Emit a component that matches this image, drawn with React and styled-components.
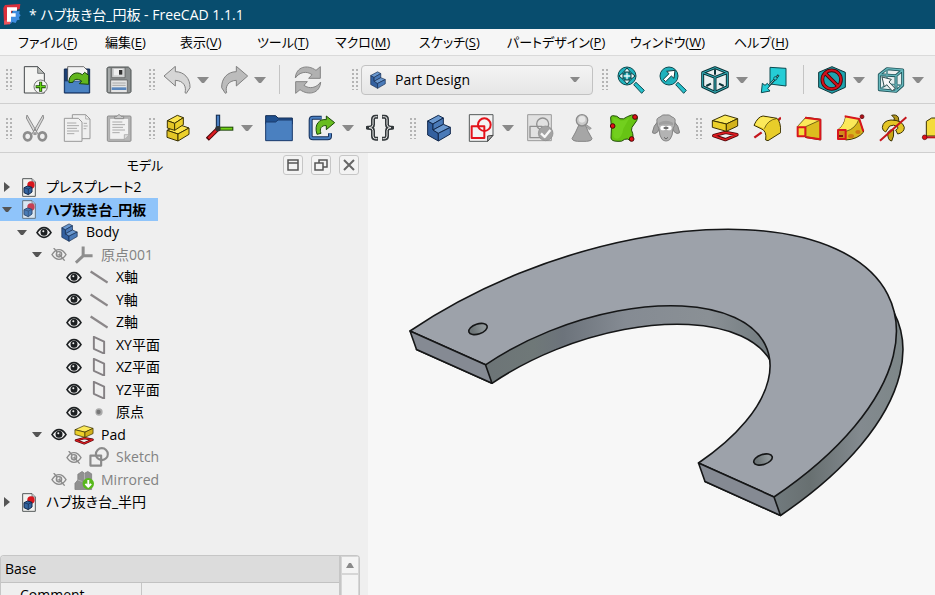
import React, { useState } from "react";
import styled, { createGlobalStyle, css } from "styled-components";

const GlobalStyle = createGlobalStyle`
  * {
    box-sizing: border-box;
  }

  body {
    margin: 0;
    background-color: #efefef;
    color: #000;
    font-family: "Open Sans", "Noto Sans CJK JP", sans-serif;
    font-size: 14px;
    line-height: 20px;
    font-feature-settings: "palt";
  }

  button,
  select {
    font: inherit;
    font-feature-settings: inherit;
    color: inherit;
    background: none;
    border: none;
    margin: 0;
    padding: 0;
  }

  svg {
    display: block;
    flex: none;
  }
`;

const Window = styled.div`
  display: flex;
  flex-direction: column;
  height: 100vh;
  overflow: hidden;
`;

const TitleBar = styled.header`
  display: flex;
  flex: none;
  align-items: center;
  gap: 8px;
  height: 29px;
  padding-left: 3px;
  background-color: #084d6e;
  color: #fff;
`;

const Title = styled.h1`
  margin: 0;
  font-size: 14px;
  font-weight: 400;
  white-space: nowrap;
`;

const MenuBar = styled.nav`
  display: flex;
  flex: none;
  gap: 28px;
  height: 27px;
  padding-left: 18px;
  background-color: #f6f6f6;
  border-bottom: 1px solid #dadada;
  font-size: 13px;
`;

const MenuItem = styled.button`
  flex: none;
  width: ${(props) => props.$width}px;
  text-align: left;
  white-space: nowrap;

  u {
    text-underline-offset: 2px;
    text-decoration-thickness: 1px;
  }
`;

const ToolBar = styled.div`
  display: flex;
  flex: none;
  align-items: center;
  height: ${(props) => props.$height}px;
  border-bottom: 1px solid #cfcfcf;
  overflow: hidden;
`;

const Group = styled.div`
  display: flex;
  flex: none;
  align-items: center;
  margin-right: ${(props) => (props.$spaced ? 17 : 3)}px;
`;

const Handle = styled.span`
  width: 14px;
  height: 21px;
  border-left: 6px solid transparent;
  border-right: 1px solid transparent;
  background-image: radial-gradient(circle at 1px 1px, #b4b4b4 1px, transparent 1px);
  background-size: 4px 4px;
  background-clip: padding-box;
  background-origin: padding-box;
`;

const Tool = styled.button`
  display: flex;
  align-items: center;
  justify-content: center;
  width: ${(props) => (props.$slim ? 40 : 42)}px;
  height: 40px;
`;

const DropButton = styled.button`
  display: flex;
  align-items: center;
  width: 17px;
  height: 40px;
`;

const Separator = styled.span`
  width: 16px;
  height: 29px;
  background: linear-gradient(#c4c4c4, #c4c4c4) center / 1px 100% no-repeat;
`;

const Workbench = styled.label`
  display: flex;
  align-items: center;
  gap: 8px;
  width: 232px;
  height: 30px;
  margin-left: 1px;
  padding: 0 12px 0 7px;
  border: 1px solid #c2c2c2;
  border-radius: 4px;
  background: linear-gradient(#f4f4f4, #e6e6e6);

  select {
    flex: 1;
    appearance: none;
    outline: none;
  }
`;

const Main = styled.main`
  display: flex;
  flex: 1;
  min-height: 0;
`;

const SidePanel = styled.aside`
  display: flex;
  flex-direction: column;
  flex: none;
  width: 368px;
  overflow: hidden;
`;

const PanelHeader = styled.div`
  display: flex;
  flex: none;
  align-items: center;
  gap: 8px;
  height: 23px;
  padding: 0 9px 0 15px;
`;

const PanelTitle = styled.h2`
  flex: 1;
  margin: 0;
  font-size: 13px;
  font-weight: 400;
  text-align: center;
`;

const PanelButton = styled.button`
  display: flex;
  align-items: center;
  justify-content: center;
  width: 20px;
  height: 20px;
  border: 1px solid #c6c6c6;
  border-radius: 3px;
  background-color: #f3f3f3;
`;

const Tree = styled.ul`
  flex: none;
  margin: 0;
  padding: 0 0 42px;
  list-style: none;
`;

const TreeRow = styled.li`
  display: flex;
  align-items: center;
  width: fit-content;
  height: 22px;
  padding-left: ${(props) => props.$depth * 15}px;
  padding-right: 12px;
  color: ${(props) => (props.$muted ? "#828282" : "#000")};
  white-space: nowrap;

  &:nth-child(even) {
    height: 23px;
  }

  ${(props) =>
    props.$selected &&
    css`
      background-color: #8fc4fa;
      font-weight: 700;
    `}
`;

const Twisty = styled.button`
  display: flex;
  justify-content: center;
  width: 14px;
  margin-right: 6px;
`;

const EyeButton = styled.button`
  display: flex;
  justify-content: center;
  width: 18px;
  margin-right: 7px;
`;

const NodeIcon = styled.span`
  display: flex;
  justify-content: center;
  width: 18px;
  margin-right: 8px;
`;

const Properties = styled.section`
  display: flex;
  flex: 1;
  min-height: 0;
  margin-right: 8px;
  border: 1px solid #c6c6c6;
  border-bottom: none;
  border-radius: 4px 4px 0 0;
  overflow: hidden;
`;

const PropertyTable = styled.table`
  flex: 1;
  height: fit-content;
  border-collapse: collapse;
  table-layout: fixed;

  th,
  td {
    height: 26px;
    padding: 0;
    font-weight: 400;
    text-align: left;
  }

  thead th {
    padding-left: 4px;
    background-color: #dcdcdc;
    border-bottom: 1px solid #c2c2c2;
  }

  tbody th {
    width: 140px;
    padding-left: 19px;
    border-right: 1px solid #c6c6c6;
  }
`;

const ScrollTrack = styled.div`
  display: flex;
  flex-direction: column;
  gap: 2px;
  width: 20px;
  padding: 1px 1px 0;
  border-left: 2px solid #c6c6c6;
  background-color: #d6d6d6;
`;

const ScrollUp = styled.button`
  display: flex;
  align-items: center;
  justify-content: center;
  height: 16px;
  background-color: #f4f4f4;
`;

const ScrollThumb = styled.div`
  flex: 1;
  background-color: #f4f4f4;
`;

const Viewport = styled.section`
  flex: 1;
  min-width: 0;
  background-color: #f7f7f7;

  svg {
    width: 100%;
    height: 100%;
  }
`;

/* ---------- icons ---------- */

const Icon = ({ size = 28, children }) => (
  <svg width={size} height={size} viewBox="0 0 84 84" strokeLinejoin="round" aria-hidden="true">
    {children}
  </svg>
);

const Caret = ({ width = 12 }) => (
  <svg width={width} height={width / 2} viewBox="0 0 12 6" aria-hidden="true">
    <path d="M0 0H12L7 6H5Z" fill="#8a8a8a" />
  </svg>
);

const Logo = () => (
  <svg width="18" height="21" viewBox="0 0 54 63" aria-hidden="true">
    <path d="M30 20 38 18 42 22 50 21 49 29 53 34 48 40 50 47 42 49 38 57 28 54 22 60 18 54Z" fill="#3e8de0" />
    <path d="M6 3 52 0 50 15 27 21 21 61 3 56 1 12Z" fill="#d92f3c" />
    <path d="M4 50 22 44 21 61 3 62Z" fill="#f0545c" />
    <path d="M12 10H42V20H24V28H38V38H24V53H12Z" fill="#fff" />
  </svg>
);

const NewIcon = () => (
  <Icon>
    <path d="M10 2H50L70 22V81H10Z" fill="#f4f4f2" stroke="#44484a" strokeWidth="3" />
    <path d="M50 2V22H70Z" fill="#b9bbb8" stroke="#44484a" strokeWidth="2" />
    <circle cx="59" cy="62" r="20" fill="#f3f3f3" stroke="#777" strokeWidth="3" />
    <path d="M59 47V77M44 62H74" stroke="#1c4a05" strokeWidth="9" />
    <path d="M59 49V75M46 62H72" stroke="#63d616" strokeWidth="4" />
  </Icon>
);

const OpenIcon = () => (
  <Icon>
    <path d="M4 9H80V81H4Z" fill="#1c3f74" stroke="#10294e" strokeWidth="3" />
    <path d="M14 2H62L74 14V50H14Z" fill="#f3f3f3" stroke="#333" strokeWidth="2" />
    <path d="M5 45H79V80H5Z" fill="#4a82c2" stroke="#17366a" strokeWidth="2" />
    <path d="M18 50C16 28 38 12 58 26L65 19 77 28V55L49 53 56 45C42 36 32 40 30 49Z" fill="#62b61d" stroke="#17440a" strokeWidth="3" />
  </Icon>
);

const SaveIcon = () => (
  <Icon>
    <path d="M10 3H70L78 11V77L74 81H10L6 77V7Z" fill="#8b8f8f" stroke="#4d5252" strokeWidth="3" />
    <path d="M10 7H14V77H10Z" fill="#b4b7b7" />
    <rect x="20" y="5" width="40" height="30" fill="#cfd1d1" stroke="#555" strokeWidth="2" />
    <rect x="27" y="9" width="26" height="19" fill="#efefef" />
    <rect x="42" y="12" width="10" height="14" fill="#333" />
    <rect x="17" y="42" width="50" height="38" fill="#e5e5e5" stroke="#555" strokeWidth="2" />
    <path d="M22 51H62M22 58H62" stroke="#888" strokeWidth="2" />
    <rect x="20" y="64" width="44" height="8" fill="#5a86bd" />
  </Icon>
);

const undoPath = "M3 30 37 1V17C63 17 82 37 81 65L70 82 66 80C71 62 62 44 37 43V60Z";

const UndoIcon = () => (
  <Icon>
    <path d={undoPath} fill="#d6d6d6" stroke="#808080" strokeWidth="3" />
  </Icon>
);

const RedoIcon = () => (
  <Icon>
    <g transform="matrix(-1 0 0 1 86 0)">
      <path d={undoPath} fill="#bcbcbc" stroke="#808080" strokeWidth="3" />
    </g>
  </Icon>
);

const RefreshIcon = () => (
  <Icon>
    <g fill="#b1b1b1" stroke="#858585" strokeWidth="3">
      <path d="M4 36C6 2 40-6 66 13L79 2V37H44L54 26C38 14 16 18 4 36Z" />
      <path d="M80 48C78 82 44 90 18 71L5 82V47H40L30 58C46 70 68 66 80 48Z" />
    </g>
  </Icon>
);

const Block = ({ light, mid, dark, line }) => (
  <g stroke={line} strokeWidth="3">
    <path d="M8 21V63L40 81V58L24 48V30Z" fill={dark} />
    <path d="M8 21 40 4 55 12 24 30Z" fill={light} />
    <path d="M24 30 55 12V31L24 48Z" fill={mid} />
    <path d="M24 48 55 31 76 40 40 58Z" fill={light} />
    <path d="M40 58 76 40V60L40 81Z" fill={mid} />
  </g>
);

const BodyIcon = ({ size }) => (
  <Icon size={size}>
    <Block light="#6a98cf" mid="#4a7ab8" dark="#33609f" line="#11284c" />
  </Icon>
);

const ZoomBase = () => (
  <g stroke="#0c4a50" strokeWidth="3">
    <path d="M50 56 57 49 82 73 74 82Z" fill="#27c0cb" />
    <circle cx="30" cy="30" r="27" fill="#20b2bd" />
  </g>
);

const ZoomFitIcon = () => (
  <Icon>
    <ZoomBase />
    <path d="M30 6 40 18H20ZM30 54 40 42H20ZM6 30 18 20V40ZM54 30 42 20V40Z" fill="#e4f7f8" stroke="#0c3a3e" strokeWidth="3" />
    <path d="M21 21H39V39H21Z" fill="#20b2bd" stroke="#0c3a3e" strokeWidth="2" />
    <path d="M30 20V40M20 30H40" stroke="#e4f7f8" strokeWidth="4" />
  </Icon>
);

const ZoomSelIcon = () => (
  <Icon>
    <ZoomBase />
    <path d="M48 13 45 37 37 30 20 47 13 40 30 23 23 16Z" fill="#fff" stroke="#0c3a3e" strokeWidth="3" />
  </Icon>
);

const isoEdges = "M42 5 79 20V62L42 79 5 62V20ZM5 20 42 34 79 20M42 34V79";

const IsoIcon = () => (
  <Icon>
    <path d={isoEdges} fill="#eaf0f0" stroke="#0a3338" strokeWidth="9" />
    <path d={isoEdges} fill="none" stroke="#35b4bd" strokeWidth="3" />
    <path d="M42 10V26M16 60 30 53M68 60 54 53" stroke="#0a3338" strokeWidth="6" />
  </Icon>
);

const AlignIcon = () => (
  <Icon>
    <path d="M30 4 78 7V60L30 54Z" fill="#25cdd6" stroke="#0c4a50" strokeWidth="3" />
    <path d="M56 27 26 60" stroke="#0c3a3e" strokeWidth="7" />
    <path d="M54 29 24 61" stroke="#bff0f2" strokeWidth="2" />
    <circle cx="46" cy="37" r="5" fill="#25cdd6" stroke="#0c3a3e" strokeWidth="2" />
    <path d="M4 80 7 52 15 58 22 52 29 60 23 67 30 75Z" fill="#25cdd6" stroke="#0c4a50" strokeWidth="3" />
  </Icon>
);

const NoSignIcon = () => (
  <Icon>
    <path d="M42 2 82 19V64L42 82 2 64V19Z" fill="#1fa5b0" stroke="#0a3338" strokeWidth="3" />
    <circle cx="41" cy="41" r="28" fill="none" stroke="#3f0408" strokeWidth="11" />
    <path d="M22 22 60 60" stroke="#3f0408" strokeWidth="11" />
    <circle cx="41" cy="41" r="28" fill="none" stroke="#d4121c" strokeWidth="6" />
    <path d="M22 22 60 60" stroke="#d4121c" strokeWidth="6" />
  </Icon>
);

const selectEdges = "M7 26 30 8 77 12V58L57 76 7 71ZM7 26 57 29 77 12M57 29V76";

const CubeSelectIcon = () => (
  <Icon>
    <path d={selectEdges} fill="#e4eeee" stroke="#1f5359" strokeWidth="9" />
    <path d="M30 10V54L9 70M30 54 76 58" fill="none" stroke="#4f8e93" strokeWidth="5" />
    <path d={selectEdges} fill="none" stroke="#66b9be" strokeWidth="4" />
    <path d="M15 33 43 40 36 48 54 67 46 75 29 56 22 63Z" fill="#f6f6f6" stroke="#304e50" strokeWidth="3" />
  </Icon>
);

const CutIcon = () => (
  <Icon>
    <path d="M18 3 50 58 43 62 16 12ZM66 3 34 58 41 62 68 12Z" fill="#d8d8d8" stroke="#8d8d8d" strokeWidth="3" />
    <ellipse cx="20" cy="67" rx="11" ry="12" fill="none" stroke="#8d8d8d" strokeWidth="8" />
    <ellipse cx="64" cy="67" rx="11" ry="12" fill="none" stroke="#8d8d8d" strokeWidth="8" />
    <circle cx="42" cy="48" r="3" fill="#888" />
  </Icon>
);

const CopyIcon = () => (
  <Icon>
    <path d="M28 2H68L81 15V74H28Z" fill="#efefef" stroke="#999" strokeWidth="3" />
    <path d="M68 2V15H81" fill="none" stroke="#999" strokeWidth="2" />
    <path d="M4 13H46L57 24V82H4Z" fill="#f1f1f1" stroke="#999" strokeWidth="3" />
    <path d="M12 27H40M12 35H48M12 43H42M12 51H48M12 59H34M62 28H72M62 36H74M62 44H70" stroke="#aaa" strokeWidth="3" />
  </Icon>
);

const PasteIcon = () => (
  <Icon>
    <rect x="7" y="6" width="71" height="76" rx="3" fill="#b6b6b6" stroke="#8d8d8d" strokeWidth="3" />
    <path d="M14 13H71V62L58 76H14Z" fill="#f1f1f1" stroke="#999" strokeWidth="2" />
    <path d="M29 14V7H36L42 1 48 7H56V14Z" fill="#c9c9c9" stroke="#8d8d8d" strokeWidth="3" />
    <path d="M22 24H52M22 32H60M22 40H54M22 48H60M22 56H44" stroke="#aaa" strokeWidth="3" />
    <path d="M58 76V62H71" fill="#ddd" stroke="#999" strokeWidth="2" />
  </Icon>
);

const PartIcon = () => (
  <Icon>
    <g stroke="#3b3203" strokeWidth="3">
      <path d="M9 49 46 32 75 42 42 60Z" fill="#fbe44d" />
      <path d="M9 49 42 60V81L9 70Z" fill="#e3c526" />
      <path d="M42 60 75 42V61L42 81Z" fill="#ecd02a" />
      <path d="M10 20 40 4 58 11 32 28Z" fill="#fbe44d" />
      <path d="M10 20 32 28V49L10 42Z" fill="#e3c526" />
      <path d="M32 28 58 11V32L32 49Z" fill="#ecd02a" />
    </g>
  </Icon>
);

const AxesIcon = () => (
  <Icon>
    <path d="M36 2V44" stroke="#142b4c" strokeWidth="13" />
    <path d="M36 5V44" stroke="#4a7fc1" strokeWidth="7" />
    <path d="M36 44H82" stroke="#1c4408" strokeWidth="12" />
    <path d="M36 44H79" stroke="#73d216" strokeWidth="6" />
    <path d="M36 44 4 76" stroke="#4a0508" strokeWidth="13" />
    <path d="M36 44 7 73" stroke="#dd1c22" strokeWidth="7" />
    <circle cx="36" cy="44" r="8" fill="#2f3436" />
  </Icon>
);

const FolderIcon = () => (
  <Icon>
    <path d="M2 5H32L39 12H82V30H2Z" fill="#20508f" stroke="#122c54" strokeWidth="3" />
    <path d="M2 24H32L39 18H82V80H2Z" fill="#4a80c0" stroke="#1a3a6b" strokeWidth="3" />
  </Icon>
);

const LinkIcon = () => (
  <Icon>
    <path d="M44 11H18Q11 11 11 18V66Q11 73 18 73H62Q69 73 69 66V58" fill="none" stroke="#16305a" strokeWidth="12" />
    <path d="M44 11H18Q11 11 11 18V66Q11 73 18 73H62Q69 73 69 66V58" fill="none" stroke="#4a7fc1" strokeWidth="6" />
    <path d="M30 61C20 30 38 14 58 17V6L83 26 58 47V35C44 33 36 44 42 58Z" fill="#68bd20" stroke="#1b4a08" strokeWidth="3" />
  </Icon>
);

const BracesIcon = () => (
  <Icon>
    <g fill="none" stroke="#33383b" strokeWidth="12">
      <path d="M36 8H29Q21 8 21 16V32Q21 41 5 41Q21 41 21 50V66Q21 74 29 74H36" />
      <path d="M48 8H55Q63 8 63 16V32Q63 41 79 41Q63 41 63 50V66Q63 74 55 74H48" />
    </g>
    <g fill="none" stroke="#e8e8e8" strokeWidth="3">
      <path d="M34 8H29Q21 8 21 16V32Q21 41 9 41Q21 41 21 50V66Q21 74 29 74H34" />
      <path d="M50 8H55Q63 8 63 16V32Q63 41 75 41Q63 41 63 50V66Q63 74 55 74H50" />
    </g>
  </Icon>
);

const SketchIcon = () => (
  <Icon>
    <path d="M7 2H78V64L62 82H7Z" fill="#f3f3f3" stroke="#55595a" strokeWidth="3" />
    <path d="M62 82V66L78 64Z" fill="#aaa" stroke="#444" strokeWidth="3" />
    <rect x="14" y="37" width="38" height="35" fill="none" stroke="#e3131b" strokeWidth="6" />
    <circle cx="52" cy="32" r="19" fill="none" stroke="#e3131b" strokeWidth="6" />
  </Icon>
);

const ValidateIcon = () => (
  <Icon>
    <path d="M5 2H76V80H5Z" fill="#e1e1e1" stroke="#9b9b9b" strokeWidth="3" />
    <rect x="12" y="37" width="36" height="34" fill="none" stroke="#909090" strokeWidth="4" />
    <circle cx="50" cy="30" r="18" fill="none" stroke="#909090" strokeWidth="4" />
    <circle cx="59" cy="58" r="22" fill="#a3a3a3" stroke="#8a8a8a" strokeWidth="2" />
    <path d="M45 58 56 69 73 48" fill="none" stroke="#f7f7f7" strokeWidth="7" />
  </Icon>
);

const CheckGeometryIcon = () => (
  <Icon>
    <path d="M33 32 23 54 12 74Q13 81 28 82H56Q72 81 72 74L60 52 52 32Z" fill="#a6a6a6" stroke="#858585" strokeWidth="3" />
    <path d="M55 32 70 43 64 47 52 36Z" fill="#aaa" stroke="#858585" strokeWidth="2" />
    <circle cx="42" cy="19" r="17" fill="#c9c9c9" stroke="#8c8c8c" strokeWidth="4" />
    <circle cx="42" cy="16" r="10" fill="#e6e6e6" />
  </Icon>
);

const BinderIcon = () => (
  <Icon>
    <path d="M2 12Q1 6 8 5Q22 4 30 14Q40 18 52 8Q64 0 78 4Q86 10 80 20L66 40Q62 48 68 58Q72 76 62 80Q52 72 44 76Q36 84 24 82Q4 82 3 72Q6 44 2 12Z" fill="#67c414" stroke="#204d06" strokeWidth="3" />
    <path d="M10 12Q24 12 32 20Q44 22 58 12L40 44Q36 70 22 74Q12 74 10 66Z" fill="#72cf1e" />
    <g fill="#e01018" stroke="#4a0508" strokeWidth="3">
      <circle cx="75" cy="9" r="7" />
      <circle cx="8" cy="36" r="7" />
      <circle cx="65" cy="75" r="7" />
    </g>
  </Icon>
);

const CloneIcon = () => (
  <Icon>
    <path d="M18 22Q4 34 1 56Q8 62 17 54L24 38ZM66 22Q80 34 83 56Q76 62 67 54L60 38Z" fill="#a2a2a2" stroke="#808080" strokeWidth="3" />
    <path d="M15 24Q12 12 24 9Q32 0 42 3Q52 0 60 9Q72 12 69 24Q70 34 63 44Q62 66 54 76Q42 86 30 76Q22 66 21 44Q14 34 15 24Z" fill="#b3b3b3" stroke="#858585" strokeWidth="3" />
    <path d="M21 26Q42 14 63 26V34Q42 28 21 34Z" fill="#9f9f9f" />
    <ellipse cx="33" cy="42" rx="8" ry="7" fill="#fff" />
    <ellipse cx="51" cy="42" rx="8" ry="7" fill="#fff" />
    <path d="M35 42H49" stroke="#555" strokeWidth="5" />
    <path d="M36 70 42 75 48 70" fill="none" stroke="#666" strokeWidth="3" />
  </Icon>
);

const PadIcon = ({ size }) => (
  <Icon size={size}>
    <path d="M8 65 44 55 78 62 43 77Z" fill="none" stroke="#4a0508" strokeWidth="10" />
    <path d="M8 65 44 55 78 62 43 77Z" fill="none" stroke="#dd1c22" strokeWidth="5" />
    <g stroke="#3b3203" strokeWidth="3">
      <path d="M4 20 42 3 80 14 46 30Z" fill="#fbe95a" />
      <path d="M4 20 46 30V52L4 40Z" fill="#ecd02a" />
      <path d="M46 30 80 14V36L46 52Z" fill="#d3b21c" />
    </g>
  </Icon>
);

const RevolutionIcon = () => (
  <Icon>
    <path d="M4 71 26 55M68 26 84 11" stroke="#c4151c" strokeWidth="7" />
    <path d="M3 34Q14 8 30 6L72 13Q84 24 83 56L45 80 38 78Q42 50 24 44Z" fill="#e8cd2a" stroke="#3b3203" strokeWidth="3" />
    <path d="M6 33Q16 10 30 8L66 14Q44 18 34 44Q28 40 6 33Z" fill="#fbe95a" />
    <path d="M34 44Q44 18 70 14" fill="none" stroke="#3b3203" strokeWidth="2" />
  </Icon>
);

const LoftIcon = () => (
  <Icon>
    <path d="M7 38 33 10 77 16V78L31 70Z" fill="#e8cd2a" stroke="#3b3203" strokeWidth="3" />
    <path d="M7 38 33 12 77 18 32 38Z" fill="#fbe95a" />
    <path d="M32 38 76 18V76L32 68Z" fill="#dcbd1f" stroke="#3b3203" strokeWidth="2" />
    <path d="M30 11 76 17V76L34 70" fill="none" stroke="#d8161d" strokeWidth="6" />
    <rect x="8" y="40" width="23" height="27" fill="#f4dc3c" stroke="#d8161d" strokeWidth="6" />
  </Icon>
);

const PipeIcon = () => (
  <Icon>
    <path d="M4 46Q22 34 26 8L66 15 80 54Q62 76 26 78Z" fill="#d6b51d" stroke="#3b3203" strokeWidth="3" />
    <path d="M4 46Q22 34 26 8L66 15Q56 44 27 52Z" fill="#fbe95a" />
    <path d="M27 52Q56 44 66 15" fill="none" stroke="#3b3203" strokeWidth="2" />
    <ellipse cx="42" cy="66" rx="9" ry="6" fill="#cf7a14" />
    <ellipse cx="63" cy="54" rx="8" ry="6" fill="#cf7a14" />
    <path d="M23 7 67 15 79 52" fill="none" stroke="#d8161d" strokeWidth="6" />
    <rect x="3" y="48" width="23" height="27" fill="#d08a1c" stroke="#d8161d" strokeWidth="6" />
    <path d="M6 66H18" stroke="#7a0d10" strokeWidth="6" />
    <circle cx="75" cy="8" r="6" fill="#b01018" stroke="#4a0508" strokeWidth="2" />
  </Icon>
);

const HelixIcon = () => (
  <Icon>
    <path d="M38 4Q52 0 58 10L60 24 44 26 46 12Z" fill="#b4961a" stroke="#3b3203" strokeWidth="3" />
    <path d="M10 40Q12 20 36 18Q70 18 76 40Q76 56 56 60L50 48Q60 44 56 38Q44 30 32 36L20 54Q10 50 10 40Z" fill="#e3c526" stroke="#3b3203" strokeWidth="3" />
    <path d="M26 56Q34 44 44 48Q46 68 38 81Q26 80 26 56Z" fill="#c9a716" stroke="#3b3203" strokeWidth="3" />
    <path d="M3 80 82 10" stroke="#c4151c" strokeWidth="6" />
  </Icon>
);

const BoxIcon = () => (
  <Icon>
    <path d="M16 22 32 12H76V66H16Z" fill="#f4dc3c" stroke="#3b3203" strokeWidth="3" />
    <path d="M8 70H60" stroke="#c4151c" strokeWidth="6" />
    <circle cx="11" cy="70" r="7" fill="#e01018" stroke="#4a0508" strokeWidth="2" />
  </Icon>
);

const DocIcon = ({ faded }) => (
  <svg width="14" height="19" viewBox="0 0 42 57" opacity={faded ? 0.75 : 1} aria-hidden="true">
    <path d="M2 2H30L40 12V55H2Z" fill="#f2f2f0" stroke="#55595a" strokeWidth="3" />
    <path d="M30 2V12H40" fill="#ccc" stroke="#55595a" strokeWidth="2" />
    <circle cx="27" cy="21" r="11" fill="#d8161d" />
    <path d="M6 29 17 24 30 28V42L19 50 6 44Z" fill="#32639f" stroke="#14294a" strokeWidth="3" />
    <path d="M6 29 19 33 30 28M19 33V50" fill="none" stroke="#14294a" strokeWidth="2" />
  </svg>
);

const EyeIcon = ({ hidden }) => (
  <svg width="16" height="13" viewBox="0 0 48 39" aria-hidden="true">
    <g fill="none" stroke={hidden ? "#8b8b8b" : "#1d2022"} strokeWidth={hidden ? 4 : 5}>
      <path d="M3 20Q12 5 24 5Q36 5 45 20Q36 34 24 34Q12 34 3 20Z" />
      <circle cx="24" cy="19" r="8" fill={hidden ? "#bbb" : "#1d2022"} />
      {hidden && <path d="M8 0 41 38" />}
    </g>
    <circle cx="22" cy="16" r="3" fill="#efefef" />
  </svg>
);

const OriginIcon = () => (
  <Icon size={18}>
    <path d="M38 2V46H82M38 46 4 78" fill="none" stroke="#8e8e8e" strokeWidth="14" />
  </Icon>
);

const AxisIcon = () => (
  <Icon size={18}>
    <path d="M3 16 82 68" stroke="#8b8789" strokeWidth="11" />
  </Icon>
);

const PlaneIcon = () => (
  <Icon size={18}>
    <path d="M18 4 66 26V82L18 60Z" fill="none" stroke="#858184" strokeWidth="9" />
  </Icon>
);

const PointIcon = () => (
  <Icon size={18}>
    <circle cx="42" cy="42" r="17" fill="#aaa" />
    <circle cx="40" cy="42" r="10" fill="#777" />
  </Icon>
);

const SketchNodeIcon = () => (
  <Icon size={20}>
    <g fill="none" stroke="#8b8b8b" strokeWidth="9">
      <rect x="6" y="36" width="45" height="42" />
      <circle cx="54" cy="30" r="25" />
    </g>
  </Icon>
);

const MirroredIcon = () => (
  <Icon size={20}>
    <path d="M4 82V56L16 42V18L34 6 44 14 58 6 74 16V82Z" fill="#909090" stroke="#7b7b7b" strokeWidth="3" />
    <path d="M44 14V50M16 42 34 48" stroke="#b5b5b5" strokeWidth="4" />
    <circle cx="60" cy="58" r="24" fill="#58b81c" />
    <path d="M60 42V68M48 58 60 71 72 58" fill="none" stroke="#fff" strokeWidth="8" />
  </Icon>
);

/* ---------- data ---------- */

const menus = [
  { label: "ファイル", mnemonic: "F", width: 59 },
  { label: "編集", mnemonic: "E", width: 47 },
  { label: "表示", mnemonic: "V", width: 49 },
  { label: "ツール", mnemonic: "T", width: 50 },
  { label: "マクロ", mnemonic: "M", width: 56 },
  { label: "スケッチ", mnemonic: "S", width: 60 },
  { label: "パートデザイン", mnemonic: "P", width: 95 },
  { label: "ウィンドウ", mnemonic: "W", width: 76 },
  { label: "ヘルプ", mnemonic: "H", width: 55 },
];

const nodes = [
  { label: "プレスプレート2", depth: 0, twisty: "closed", icon: <DocIcon /> },
  { label: "ハブ抜き台_円板", depth: 0, twisty: "open", icon: <DocIcon faded />, selected: true },
  { label: "Body", depth: 1, twisty: "open", eye: "on", icon: <BodyIcon size={19} /> },
  { label: "原点001", depth: 2, twisty: "open", eye: "off", icon: <OriginIcon /> },
  { label: "X軸", depth: 3, eye: "on", icon: <AxisIcon /> },
  { label: "Y軸", depth: 3, eye: "on", icon: <AxisIcon /> },
  { label: "Z軸", depth: 3, eye: "on", icon: <AxisIcon /> },
  { label: "XY平面", depth: 3, eye: "on", icon: <PlaneIcon /> },
  { label: "XZ平面", depth: 3, eye: "on", icon: <PlaneIcon /> },
  { label: "YZ平面", depth: 3, eye: "on", icon: <PlaneIcon /> },
  { label: "原点", depth: 3, eye: "on", icon: <PointIcon /> },
  { label: "Pad", depth: 2, twisty: "open", eye: "on", icon: <PadIcon size={20} /> },
  { label: "Sketch", depth: 3, eye: "off", icon: <SketchNodeIcon /> },
  { label: "Mirrored", depth: 2, eye: "off", icon: <MirroredIcon /> },
  { label: "ハブ抜き台_半円", depth: 0, twisty: "closed", icon: <DocIcon /> },
];

const ToolButton = ({ label, icon, slim, drop }) => (
  <>
    <Tool type="button" aria-label={label} $slim={slim}>
      {icon}
    </Tool>
    {drop && (
      <DropButton type="button" aria-label={`${label} menu`}>
        <Caret />
      </DropButton>
    )}
  </>
);

const TwistyIcon = ({ state }) =>
  state === "closed" ? (
    <svg width="6" height="10" viewBox="0 0 6 10" aria-hidden="true">
      <path d="M0 0 6 5 0 10Z" fill="#555" />
    </svg>
  ) : (
    <svg width="10" height="5" viewBox="0 0 10 5" aria-hidden="true">
      <path d="M0 0H10L6 5H4Z" fill="#555" />
    </svg>
  );

const TreeNode = ({ node }) => (
  <TreeRow $depth={node.depth} $selected={node.selected} $muted={node.eye === "off"}>
    <Twisty type="button" aria-label={`Toggle ${node.label}`}>
      {node.twisty && <TwistyIcon state={node.twisty} />}
    </Twisty>
    {node.eye && (
      <EyeButton type="button" aria-label={`Show ${node.label}`}>
        <EyeIcon hidden={node.eye === "off"} />
      </EyeButton>
    )}
    <NodeIcon>{node.icon}</NodeIcon>
    {node.label}
  </TreeRow>
);

// half ring seen in axonometric view, the lower face is the upper one shifted by the thickness
const ringPath =
  "M410 331C544.8 239.9 735.5 203.2 836 249C936.5 294.8 908.8 405.9 774 497L698.5 463C777.3 409.7 793.5 344.5 734.7 317.5C675.9 290.5 564.3 311.5 485.5 364.8Z";

const Hole = ({ x, y }) => (
  <ellipse rx="9.6" ry="5" transform={`translate(${x} ${y}) rotate(-18)`} fill="url(#hole)" />
);

const Model = () => (
  <svg viewBox="368 153 567 442" role="img" aria-label="3D model">
    <defs>
      <linearGradient id="wall" gradientUnits="userSpaceOnUse" x1="485" y1="0" x2="904" y2="0">
        <stop offset="0" stopColor="#6d7577" />
        <stop offset="0.1" stopColor="#6f7878" />
        <stop offset="0.17" stopColor="#6c737b" />
        <stop offset="0.32" stopColor="#858b93" />
        <stop offset="0.52" stopColor="#8a9095" />
        <stop offset="0.66" stopColor="#737c80" />
        <stop offset="0.76" stopColor="#687071" />
        <stop offset="0.88" stopColor="#838a8f" />
        <stop offset="1" stopColor="#7c8687" />
      </linearGradient>
      <linearGradient id="hole">
        <stop offset="0.2" stopColor="#6d7577" />
        <stop offset="0.8" stopColor="#90979a" />
      </linearGradient>
    </defs>
    <g stroke="#151617" strokeWidth="1.6" strokeLinejoin="round">
      <path d={ringPath} transform="translate(6.5 18.5)" fill="url(#wall)" />
      <path d={ringPath} fill="#9da2aa" />
      <path d="M410 331 485.5 364.8 492 383.3 416.5 349.5Z" fill="#858a93" />
      <path d="M698.5 463 774 497 780.5 515.5 705 481.5Z" fill="#858a93" />
      <Hole x={478} y={329} />
      <Hole x={763} y={459.5} />
    </g>
  </svg>
);

function App() {
  const [workbench, setWorkbench] = useState("Part Design");

  return (
    <Window>
      <GlobalStyle />
      <TitleBar>
        <Logo />
        <Title>* ハブ抜き台_円板 - FreeCAD 1.1.1</Title>
      </TitleBar>
      <MenuBar>
        {menus.map((menu) => (
          <MenuItem key={menu.mnemonic} type="button" $width={menu.width}>
            {menu.label}(<u>{menu.mnemonic}</u>)
          </MenuItem>
        ))}
      </MenuBar>

      <ToolBar $height={48}>
        <Group>
          <Handle />
          <ToolButton label="New" icon={<NewIcon />} />
          <ToolButton label="Open" icon={<OpenIcon />} />
          <ToolButton label="Save" icon={<SaveIcon />} />
        </Group>
        <Group $spaced>
          <Handle />
          <ToolButton label="Undo" icon={<UndoIcon />} slim drop />
          <ToolButton label="Redo" icon={<RedoIcon />} slim drop />
          <Separator />
          <ToolButton label="Refresh" icon={<RefreshIcon />} />
        </Group>
        <Group>
          <Handle />
          <Workbench>
            <BodyIcon size={18} />
            <select
              aria-label="Workbench"
              value={workbench}
              onChange={(e) => setWorkbench(e.target.value)}
            >
              <option>Part Design</option>
            </select>
            <Caret width={10} />
          </Workbench>
        </Group>
        <Group>
          <Handle />
          <ToolButton label="Fit all" icon={<ZoomFitIcon />} />
          <ToolButton label="Fit selection" icon={<ZoomSelIcon />} />
          <ToolButton label="Isometric" icon={<IsoIcon />} drop />
          <ToolButton label="Align to selection" icon={<AlignIcon />} />
          <Separator />
          <ToolButton label="Draw style" icon={<NoSignIcon />} drop />
          <ToolButton label="Selection view" icon={<CubeSelectIcon />} drop />
        </Group>
      </ToolBar>

      <ToolBar $height={49}>
        <Group>
          <Handle />
          <ToolButton label="Cut" icon={<CutIcon />} />
          <ToolButton label="Copy" icon={<CopyIcon />} />
          <ToolButton label="Paste" icon={<PasteIcon />} />
        </Group>
        <Group>
          <Handle />
          <ToolButton label="Part" icon={<PartIcon />} />
          <ToolButton label="Coordinate system" icon={<AxesIcon />} drop />
          <ToolButton label="Group" icon={<FolderIcon />} />
          <ToolButton label="Link" icon={<LinkIcon />} drop />
          <ToolButton label="Variable set" icon={<BracesIcon />} />
        </Group>
        <Group>
          <Handle />
          <ToolButton label="Body" icon={<BodyIcon />} />
          <ToolButton label="New sketch" icon={<SketchIcon />} drop />
          <ToolButton label="Validate sketch" icon={<ValidateIcon />} />
          <ToolButton label="Check geometry" icon={<CheckGeometryIcon />} />
          <ToolButton label="Shape binder" icon={<BinderIcon />} />
          <ToolButton label="Clone" icon={<CloneIcon />} />
        </Group>
        <Group>
          <Handle />
          <ToolButton label="Pad" icon={<PadIcon />} />
          <ToolButton label="Revolution" icon={<RevolutionIcon />} />
          <ToolButton label="Loft" icon={<LoftIcon />} />
          <ToolButton label="Pipe" icon={<PipeIcon />} />
          <ToolButton label="Helix" icon={<HelixIcon />} />
          <ToolButton label="Box" icon={<BoxIcon />} />
        </Group>
      </ToolBar>

      <Main>
        <SidePanel>
          <PanelHeader>
            <PanelTitle>モデル</PanelTitle>
            <PanelButton type="button" aria-label="Collapse">
              <svg width="12" height="12" fill="none" stroke="#555" strokeWidth="1.5">
                <path d="M1 1H11V11H1ZM1 4H11" />
              </svg>
            </PanelButton>
            <PanelButton type="button" aria-label="Float">
              <svg width="14" height="12" fill="none" stroke="#555" strokeWidth="1.5">
                <path d="M5 4V1H13V8H9M1 4H9V11H1Z" />
              </svg>
            </PanelButton>
            <PanelButton type="button" aria-label="Close">
              <svg width="12" height="12" fill="none" stroke="#666" strokeWidth="2">
                <path d="M1 1 11 11M11 1 1 11" />
              </svg>
            </PanelButton>
          </PanelHeader>
          <Tree>
            {nodes.map((node) => (
              <TreeNode key={node.label} node={node} />
            ))}
          </Tree>
          <Properties>
            <PropertyTable>
              <thead>
                <tr>
                  <th colSpan="2">Base</th>
                </tr>
              </thead>
              <tbody>
                <tr>
                  <th scope="row">Comment</th>
                  <td />
                </tr>
              </tbody>
            </PropertyTable>
            <ScrollTrack>
              <ScrollUp type="button" aria-label="Scroll up">
                <svg width="8" height="5" aria-hidden="true">
                  <path d="M0 5 3 0H5L8 5Z" fill="#8a8a8a" />
                </svg>
              </ScrollUp>
              <ScrollThumb />
            </ScrollTrack>
          </Properties>
        </SidePanel>
        <Viewport>
          <Model />
        </Viewport>
      </Main>
    </Window>
  );
}

export default App;
